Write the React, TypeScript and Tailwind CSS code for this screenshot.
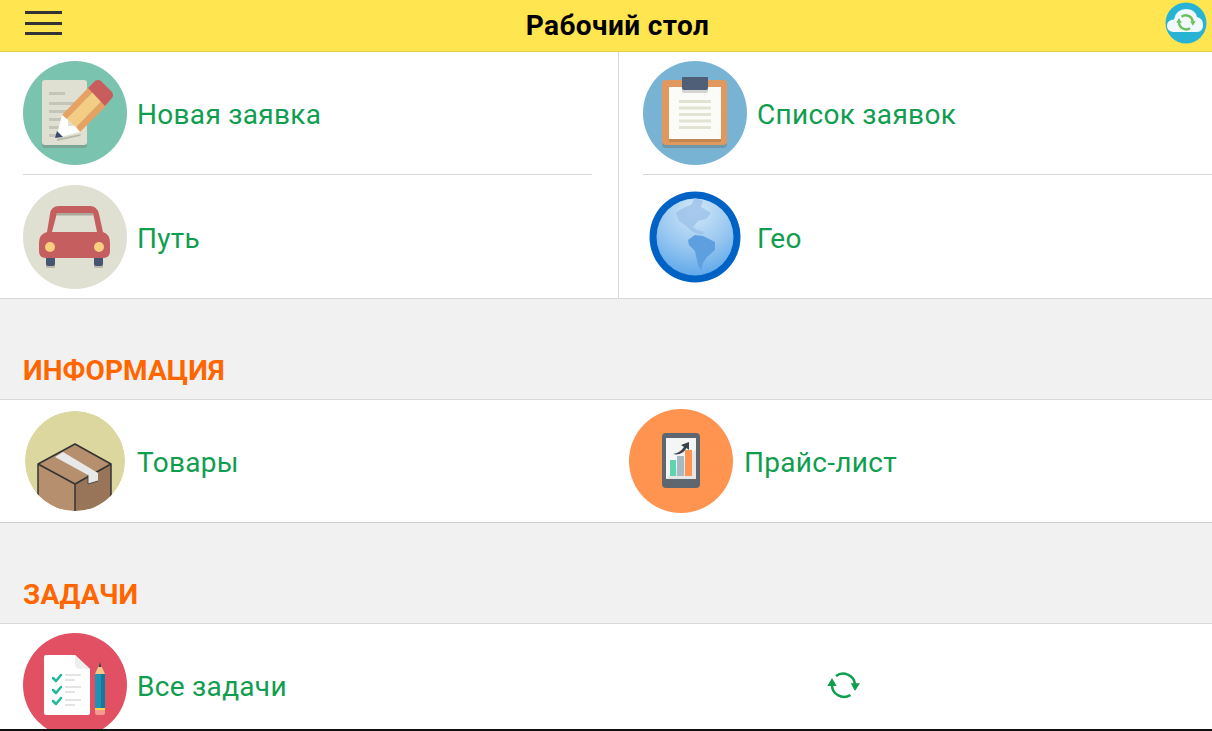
import React from 'react';

const NoteIcon = () => (
  <svg width="104" height="104" viewBox="0 0 104 104">
    <circle cx="52" cy="52" r="52" fill="#7ac3ae" />
    <rect x="19" y="23" width="45" height="64" rx="3" fill="#7ba597" />
    <rect x="19" y="19" width="45" height="65" rx="3" fill="#e0e0d2" />
    <g fill="#c4c5b8">
      <rect x="26" y="31" width="16" height="3" />
      <rect x="26" y="41" width="26" height="3" />
      <rect x="26" y="49" width="22" height="3" />
      <rect x="26" y="57" width="12" height="3" />
      <rect x="26" y="65" width="10" height="3" />
      <rect x="26" y="73" width="8" height="3" />
    </g>
    <path d="M34 78 L58 73 L57 75 L34 80 Z" fill="#b8b9ac" />
    <path d="M39 54 L65 27 L70 31 L44 58 Z" fill="#e5a262" />
    <path d="M44 58 L70 31 L79 40 L53 66 Z" fill="#f4cd85" />
    <path d="M53 66 L79 40 L83 45 L57 71 Z" fill="#e5a262" />
    <path d="M65 27 L72 20 Q75 18 78 20 L89 31 Q91 34 89 37 L82 45 Z" fill="#c95d5e" />
    <path d="M39 54 L45 59 L45 65 L52 65 L57 71 L33 77 Z" fill="#ffffff" />
    <path d="M34 70 L40 76 L32 77 Z" fill="#3c4a6b" />
  </svg>
);

const ClipboardIcon = () => (
  <svg width="104" height="104" viewBox="0 0 104 104">
    <circle cx="52" cy="52" r="52" fill="#78b3d4" />
    <rect x="19" y="22" width="65" height="65" rx="4" fill="#6f97ab" />
    <rect x="19" y="19" width="65" height="65" rx="4" fill="#e0985e" />
    <rect x="26" y="26" width="52" height="55" fill="#c28654" />
    <rect x="26" y="26" width="52" height="52" fill="#fbfbf7" />
    <rect x="39" y="16" width="26" height="16" rx="2" fill="#d4d4d4" />
    <path d="M39 16 H65 V27 Q65 29 63 29 H41 Q39 29 39 27 Z" fill="#4f5f78" />
    <g fill="#e2e3d3">
      <rect x="36" y="39" width="32" height="3" />
      <rect x="36" y="45.500" width="32" height="3" />
      <rect x="36" y="52" width="32" height="3" />
      <rect x="36" y="58.500" width="32" height="3" />
      <rect x="36" y="65" width="32" height="3" />
    </g>
  </svg>
);

const CarIcon = () => (
  <svg width="104" height="104" viewBox="0 0 104 104">
    <circle cx="52" cy="52" r="52" fill="#e0e0d2" />
    <rect x="23" y="76" width="9" height="7" rx="1" fill="#b9b9ac" />
    <rect x="71" y="76" width="9" height="7" rx="1" fill="#b9b9ac" />
    <rect x="23" y="70" width="9" height="11" rx="2" fill="#465570" />
    <rect x="71" y="70" width="9" height="11" rx="2" fill="#465570" />
    <path d="M16 66 V58 Q16 49 24 47 L27 29 Q28 21 36 21 H67 Q74 21 76 29 L80 47 Q87 49 87 58 V66 Q87 73 80 73 H23 Q16 73 16 66 Z" fill="#c55f5f" />
    <path d="M34 28 H70 L74 47 H29 Z" fill="#e0e0d2" />
    <path d="M34 28 H70 L70.500 30.500 H33.500 Z" fill="#aaa99c" />
    <circle cx="27" cy="62" r="5" fill="#f7cf7f" />
    <circle cx="76" cy="62" r="5" fill="#f7cf7f" />
  </svg>
);

const GlobeIcon = () => (
  <svg width="104" height="104" viewBox="0 0 104 104">
    <defs>
      <radialGradient id="globeFill" cx="50%" cy="15%" r="90%">
        <stop offset="0%" stopColor="#d3e8fa" />
        <stop offset="55%" stopColor="#98c7f0" />
        <stop offset="100%" stopColor="#5aa5ea" />
      </radialGradient>
    </defs>
    <circle cx="52" cy="52" r="45.500" fill="#0062c4" />
    <circle cx="52" cy="52" r="38.500" fill="url(#globeFill)" />
    <path d="M33 28 Q40 22 48 20 L52 13 L60 16 L58 22 L68 28 L63 34 L55 36 L50 42 L54 45 L62 47 L58 50 L50 47 L42 40 L36 36 Z" fill="#9cc2e8" opacity="0.8" />
    <path d="M45 55 L52 50 L60 51 L72 57 L72 65 L64 72 L60 78 L58 85 L55 80 L52 66 L46 60 Z" fill="#5e9fe0" />
  </svg>
);

const BoxIcon = () => (
  <svg width="104" height="104" viewBox="0 0 104 104">
    <defs>
      <clipPath id="boxClip">
        <circle cx="50" cy="52" r="50" />
      </clipPath>
    </defs>
    <g clipPath="url(#boxClip)">
      <circle cx="50" cy="52" r="50" fill="#dbd79f" />
      <path d="M13 55 L50 75 V104 H13 Z" fill="#b58f6e" />
      <path d="M50 75 L86 55 V104 H50 Z" fill="#987559" />
      <path d="M13 55 L50 35 L86 55 L50 75 Z" fill="#b58f6e" />
      <path d="M13 55 L50 35 L86 55 L50 75 Z M13 55 V104 M50 75 V104 M86 55 V104" fill="none" stroke="#333333" strokeWidth="1.500" strokeLinejoin="round" />
      <path d="M30 48 L38 43 L73 64 V72 L63 75 V66 Z" fill="#e8e8e8" />
      <path d="M63 66 V75 L73 72" fill="none" stroke="#333333" strokeWidth="0.800" />
    </g>
  </svg>
);

const PriceIcon = () => (
  <svg width="104" height="104" viewBox="0 0 104 104">
    <circle cx="52" cy="52" r="52" fill="#ff9350" />
    <rect x="33" y="24" width="38" height="55" rx="4" fill="#5e6770" />
    <rect x="37" y="29" width="30" height="41" fill="#f4f5f5" />
    <path d="M37 70 L67 40 V70 Z" fill="#e4e6e7" />
    <rect x="41" y="51" width="6" height="16" fill="#5fd4ad" />
    <rect x="48" y="47" width="7" height="20" fill="#a7b9c3" />
    <rect x="56" y="41" width="7" height="26" fill="#ff9350" />
    <path d="M44 45 Q51 44 55 38 L52 36 L60 33 L60 41 L57.500 39 Q53 47 44 45 Z" fill="#39424b" />
  </svg>
);

const TasksIcon = () => (
  <svg width="104" height="104" viewBox="0 0 104 104">
    <circle cx="52" cy="52" r="52" fill="#e15063" />
    <path d="M23 22 Q21 22 21 24 V80 Q21 82 23 82 H65 Q67 82 67 80 V36 L52 22 Z" fill="#ffffff" />
    <path d="M52 22 L67 36 H57 Q52 36 52 31 Z" fill="#eef0ee" />
    <g fill="none" stroke="#22b89a" strokeWidth="2.500" strokeLinecap="round" strokeLinejoin="round">
      <path d="M30 45 L33 48 L38 42" />
      <path d="M30 57 L33 60 L38 54" />
      <path d="M30 68 L33 71 L38 65" />
    </g>
    <g fill="#e4e4e4">
      <rect x="42" y="41" width="16" height="2" />
      <rect x="42" y="46" width="10" height="2" />
      <rect x="42" y="53" width="16" height="2" />
      <rect x="42" y="58" width="10" height="2" />
      <rect x="42" y="66" width="16" height="2" />
      <rect x="42" y="71" width="10" height="2" />
    </g>
    <rect x="72" y="41" width="10" height="34" fill="#1f93b6" />
    <rect x="78" y="41" width="4" height="34" fill="#17799a" />
    <path d="M72 41 L77 30 L82 41 Z" fill="#f3c78c" />
    <path d="M75.500 34 L77 29 L78.500 34 Z" fill="#3d3d3d" />
    <rect x="72" y="75" width="10" height="2" fill="#f6d354" />
    <path d="M72 77 H82 V80 Q82 82 80 82 H74 Q72 82 72 80 Z" fill="#f59a90" />
  </svg>
);

const SyncIcon = ({ size, color, weight = 2.5 }: { size: number; color: string; weight?: number }) => (
  <svg width={size} height={size} viewBox="0 0 34 34">
    <path d="M5 17 A12 12 0 0 0 23.500 27" fill="none" stroke={color} strokeWidth={weight} />
    <path d="M9 8 A12 12 0 0 1 28 16" fill="none" stroke={color} strokeWidth={weight} />
    <path d="M5 10 L0.300 18 L9.700 18 Z" fill={color} />
    <path d="M23.700 15.300 L33 15.300 L28 23 Z" fill={color} />
  </svg>
);

const Item = ({ icon, label, gap = 'gap-[10px]' }: { icon: React.ReactNode; label: string; gap?: string }) => (
  <div className={`flex items-center ${gap}`}>
    <div className="shrink-0">{icon}</div>
    <span className="pt-1 text-[28px] tracking-[0.3px] text-[#0f9d4f]">{label}</span>
  </div>
);

const SectionHead = ({ title }: { title: string }) => (
  <div className="flex h-[101px] items-end border-b border-[#d8d8d8] bg-[#f1f1f1] pb-[10px] pl-[23px]">
    <span className="text-[28px] leading-[36px] font-bold tracking-[0.1px] text-[#ff6600]">{title}</span>
  </div>
);

export default function App() {
  return (
    <div className="h-[731px] w-[1212px] overflow-hidden bg-white font-['Roboto',sans-serif]">
      <header className="relative flex h-[52px] items-center justify-center border-b border-[#e6cf45] bg-[#ffe650] pt-[1px] pl-[23px]">
        <div className="absolute top-[11px] left-[25px] w-[37px]">
          <div className="h-[3px] bg-[#333333]" />
          <div className="mt-[8px] h-[3px] bg-[#333333]" />
          <div className="mt-[7px] h-[3px] bg-[#333333]" />
        </div>
        <h1 className="text-[28px] font-bold tracking-[0.4px] text-black">Рабочий стол</h1>
        <div className="absolute top-[2px] right-[5px]">
          <svg width="42" height="42" viewBox="0 0 42 42">
            <circle cx="21" cy="21" r="20.500" fill="#27b4d4" />
            <path d="M8 30 Q2 29 2 24 Q2 18 9 17.500 Q11 7 21 7 Q30 7 32 15 Q38 16 38 23 Q38 30 32 30 Z" fill="#f1f9fc" />
            <g transform="translate(11,10) scale(0.6)">
              <SyncIcon size={34} color="#6dc05c" weight={4} />
            </g>
          </svg>
        </div>
      </header>

      <div className="grid grid-cols-[619px_1fr] border-b border-[#d8d8d8]">
        <div className="border-r border-[#d8d8d8] pr-[26px] pl-[23px]">
          <div className="flex h-[123px] items-center border-b border-[#d8d8d8]">
            <Item icon={<NoteIcon />} label="Новая заявка" />
          </div>
          <div className="flex h-[123px] items-center pt-[1px]">
            <Item icon={<CarIcon />} label="Путь" />
          </div>
        </div>
        <div className="pl-[24px]">
          <div className="flex h-[123px] items-center border-b border-[#d8d8d8]">
            <Item icon={<ClipboardIcon />} label="Список заявок" />
          </div>
          <div className="flex h-[123px] items-center pt-[1px]">
            <Item icon={<GlobeIcon />} label="Гео" />
          </div>
        </div>
      </div>

      <SectionHead title="ИНФОРМАЦИЯ" />

      <div className="grid h-[123px] grid-cols-[606px_1fr] items-center border-b border-[#d0d0d0]">
        <div className="pl-[25px]">
          <Item icon={<BoxIcon />} label="Товары" gap="gap-[8px]" />
        </div>
        <div className="pl-[23px]">
          <Item icon={<PriceIcon />} label="Прайс-лист" gap="gap-[11px]" />
        </div>
      </div>

      <SectionHead title="ЗАДАЧИ" />

      <div className="grid h-[105px] grid-cols-[606px_1fr] overflow-hidden pt-[9px]">
        <div className="pl-[23px]">
          <Item icon={<TasksIcon />} label="Все задачи" />
        </div>
        <div className="flex h-[104px] items-center pl-[221px]">
          <SyncIcon size={34} color="#0f9d4f" />
        </div>
      </div>

      <div className="h-[2px] bg-[#111111]" />
    </div>
  );
}
